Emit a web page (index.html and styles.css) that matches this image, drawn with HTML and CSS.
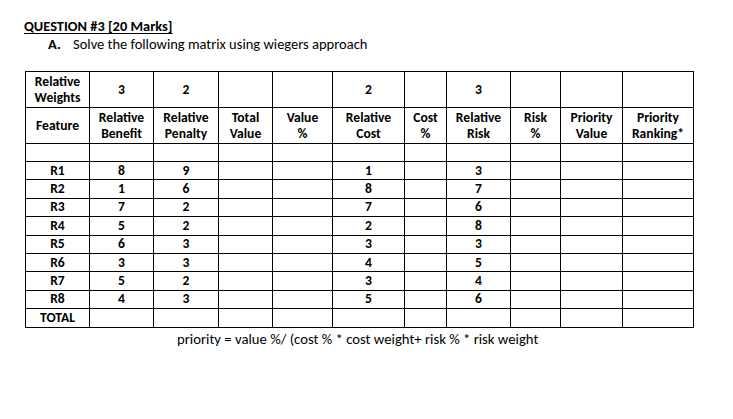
FILE: index.html
```html
<!DOCTYPE html>
<html>
<head>
<meta charset="utf-8">
<link rel="stylesheet" href="styles.css">
</head>
<body>
<div class="page">
  <div class="title">QUESTION #3 [20 Marks]</div>
  <div class="task"><span class="label">A.</span><span>Solve the following matrix using wiegers approach</span></div>
  <table class="matrix">
    <colgroup>
      <col class="c64"><col class="c64"><col class="c65"><col class="c54"><col class="c60"><col class="c72"><col class="c42"><col class="c64"><col class="c50"><col class="c62"><col class="c71">
    </colgroup>
    <tr class="tall">
      <td>Relative<br>Weights</td><td>3</td><td>2</td><td></td><td></td><td>2</td><td></td><td>3</td><td></td><td></td><td></td>
    </tr>
    <tr class="tall">
      <td>Feature</td><td>Relative<br>Benefit</td><td>Relative<br>Penalty</td><td>Total<br>Value</td><td>Value<br>%</td><td>Relative<br>Cost</td><td>Cost<br>%</td><td>Relative<br>Risk</td><td>Risk<br>%</td><td>Priority<br>Value</td><td>Priority<br>Ranking*</td>
    </tr>
    <tr class="short"><td></td><td></td><td></td><td></td><td></td><td></td><td></td><td></td><td></td><td></td><td></td></tr>
    <tr class="row"><td>R1</td><td>8</td><td>9</td><td></td><td></td><td>1</td><td></td><td>3</td><td></td><td></td><td></td></tr>
    <tr class="row"><td>R2</td><td>1</td><td>6</td><td></td><td></td><td>8</td><td></td><td>7</td><td></td><td></td><td></td></tr>
    <tr class="row"><td>R3</td><td>7</td><td>2</td><td></td><td></td><td>7</td><td></td><td>6</td><td></td><td></td><td></td></tr>
    <tr class="row"><td>R4</td><td>5</td><td>2</td><td></td><td></td><td>2</td><td></td><td>8</td><td></td><td></td><td></td></tr>
    <tr class="row"><td>R5</td><td>6</td><td>3</td><td></td><td></td><td>3</td><td></td><td>3</td><td></td><td></td><td></td></tr>
    <tr class="row"><td>R6</td><td>3</td><td>3</td><td></td><td></td><td>4</td><td></td><td>5</td><td></td><td></td><td></td></tr>
    <tr class="row"><td>R7</td><td>5</td><td>2</td><td></td><td></td><td>3</td><td></td><td>4</td><td></td><td></td><td></td></tr>
    <tr class="row"><td>R8</td><td>4</td><td>3</td><td></td><td></td><td>5</td><td></td><td>6</td><td></td><td></td><td></td></tr>
    <tr class="row"><td>TOTAL</td><td></td><td></td><td></td><td></td><td></td><td></td><td></td><td></td><td></td><td></td></tr>
  </table>
  <div class="formula">priority = value %/ (cost % * cost weight+ risk % * risk weight</div>
</div>
</body>
</html>
```

FILE: styles.css
```css
html, body {
  margin: 0;
  padding: 0;
  background: #ffffff;
}
body {
  font-family: Carlito, Lato, "Liberation Sans", sans-serif;
  color: #000;
}
.page {
  padding: 18px 0 0 24px;
}
.title {
  font-weight: bold;
  font-size: 14.4px;
  line-height: 16px;
  text-decoration: underline;
  text-decoration-thickness: 1px;
  text-underline-offset: 2px;
}
.task {
  display: flex;
  font-size: 14.5px;
  line-height: 17px;
  margin-top: 2px;
  padding-left: 24px;
}
.task .label {
  font-weight: bold;
  width: 25px;
}
.matrix {
  margin-top: 18px;
  margin-left: 1px;
  border-collapse: collapse;
  table-layout: fixed;
  width: 667px;
}
.matrix td {
  border: 1.4px solid #000;
  padding: 0;
  text-align: center;
  vertical-align: middle;
  font-weight: bold;
  font-size: 13.6px;
  line-height: 16px;
}
.c64 { width: 64px; }
.c65 { width: 65px; }
.c54 { width: 54px; }
.c60 { width: 60px; }
.c72 { width: 72px; }
.c42 { width: 42px; }
.c50 { width: 50px; }
.c62 { width: 62px; }
.c71 { width: 71px; }
.tall td { height: 35px; }
.short td { height: 17px; }
.row td { height: 17.4px; line-height: 14px; }
.formula {
  margin-top: 3px;
  padding-left: 153px;
  font-size: 14.7px;
  line-height: 17px;
}
```
